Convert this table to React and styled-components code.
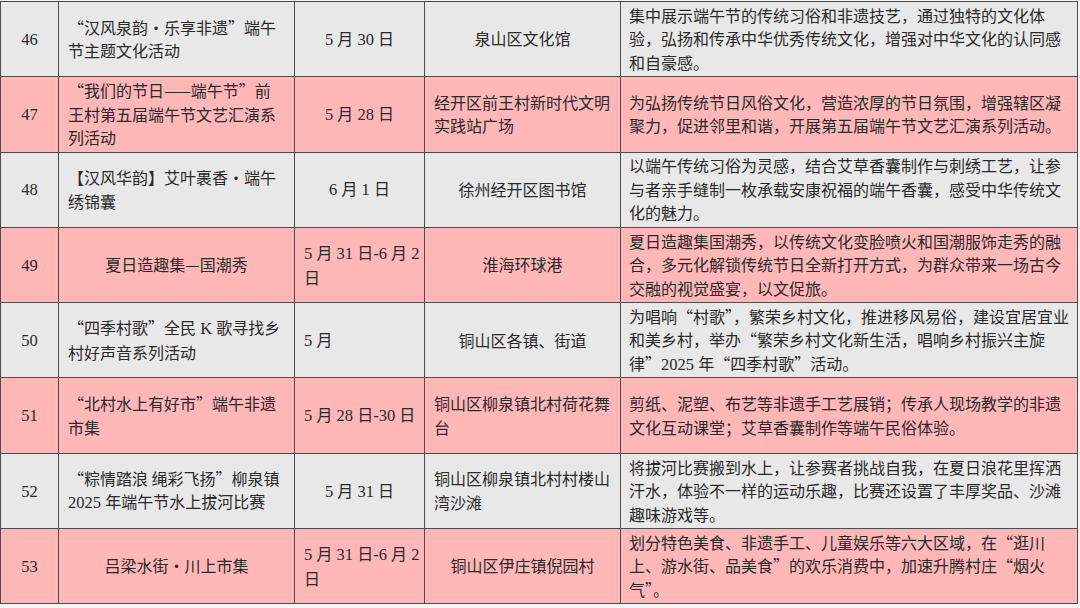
import React from 'react';
import styled, { createGlobalStyle } from 'styled-components';

const rows = [
	{
		num: '46',
		title: { lines: ['“汉风泉韵·乐享非遗”端午', '节主题文化活动'], align: 'left' },
		date: { lines: ['5 月 30 日'], align: 'center' },
		place: { lines: ['泉山区文化馆'], align: 'center' },
		desc: ['集中展示端午节的传统习俗和非遗技艺，通过独特的文化体', '验，弘扬和传承中华优秀传统文化，增强对中华文化的认同感', '和自豪感。'],
	},
	{
		num: '47',
		title: { lines: ['“我们的节日——端午节”前', '王村第五届端午节文艺汇演系', '列活动'], align: 'left' },
		date: { lines: ['5 月 28 日'], align: 'center' },
		place: { lines: ['经开区前王村新时代文明', '实践站广场'], align: 'left' },
		desc: ['为弘扬传统节日风俗文化，营造浓厚的节日氛围，增强辖区凝', '聚力，促进邻里和谐，开展第五届端午节文艺汇演系列活动。'],
	},
	{
		num: '48',
		title: { lines: ['【汉风华韵】艾叶裹香·端午', '绣锦囊'], align: 'left' },
		date: { lines: ['6 月 1 日'], align: 'center' },
		place: { lines: ['徐州经开区图书馆'], align: 'center' },
		desc: ['以端午传统习俗为灵感，结合艾草香囊制作与刺绣工艺，让参', '与者亲手缝制一枚承载安康祝福的端午香囊，感受中华传统文', '化的魅力。'],
	},
	{
		num: '49',
		title: { lines: ['夏日造趣集—国潮秀'], align: 'center' },
		date: { lines: ['5 月 31 日-6 月 2', '日'], align: 'left' },
		place: { lines: ['淮海环球港'], align: 'center' },
		desc: ['夏日造趣集国潮秀，以传统文化变脸喷火和国潮服饰走秀的融', '合，多元化解锁传统节日全新打开方式，为群众带来一场古今', '交融的视觉盛宴，以文促旅。'],
	},
	{
		num: '50',
		title: { lines: ['“四季村歌”全民 K 歌寻找乡', '村好声音系列活动'], align: 'left' },
		date: { lines: ['5 月'], align: 'left' },
		place: { lines: ['铜山区各镇、街道'], align: 'center' },
		desc: ['为唱响“村歌”，繁荣乡村文化，推进移风易俗，建设宜居宜业', '和美乡村，举办“繁荣乡村文化新生活，唱响乡村振兴主旋', '律”2025 年“四季村歌”活动。'],
	},
	{
		num: '51',
		title: { lines: ['“北村水上有好市”端午非遗', '市集'], align: 'left' },
		date: { lines: ['5 月 28 日-30 日'], align: 'center' },
		place: { lines: ['铜山区柳泉镇北村荷花舞', '台'], align: 'left' },
		desc: ['剪纸、泥塑、布艺等非遗手工艺展销；传承人现场教学的非遗', '文化互动课堂；艾草香囊制作等端午民俗体验。'],
	},
	{
		num: '52',
		title: { lines: ['“粽情踏浪 绳彩飞扬”柳泉镇', '2025 年端午节水上拔河比赛'], align: 'left' },
		date: { lines: ['5 月 31 日'], align: 'center' },
		place: { lines: ['铜山区柳泉镇北村村楼山', '湾沙滩'], align: 'left' },
		desc: ['将拔河比赛搬到水上，让参赛者挑战自我，在夏日浪花里挥洒', '汗水，体验不一样的运动乐趣，比赛还设置了丰厚奖品、沙滩', '趣味游戏等。'],
	},
	{
		num: '53',
		title: { lines: ['吕梁水街·川上市集'], align: 'center' },
		date: { lines: ['5 月 31 日-6 月 2', '日'], align: 'left' },
		place: { lines: ['铜山区伊庄镇倪园村'], align: 'center' },
		desc: ['划分特色美食、非遗手工、儿童娱乐等六大区域，在“逛川', '上、游水街、品美食”的欢乐消费中，加速升腾村庄“烟火', '气”。'],
	},
];

// latin runs (digits, letters) are set in the serif face, the rest in the CJK face
const mixed = (text) =>
	text.split(/([0-9A-Za-z\- ]+)/).map((part, i) =>
		/[0-9A-Za-z]/.test(part) ? <Latin key={i}>{part}</Latin> : part
	);

const CellText = ({ lines }) =>
	lines.map((line, i) => <Line key={i}>{mixed(line)}</Line>);

const App = () => (
	<>
		<GlobalStyle />
		<Sheet>
			<Table>
				<colgroup>
					<col style={{ width: 58 }} />
					<col style={{ width: 236 }} />
					<col style={{ width: 130 }} />
					<col style={{ width: 196 }} />
					<col style={{ width: 457 }} />
				</colgroup>
				<tbody>
					{rows.map((row, i) => (
						<Row key={row.num} pink={i % 2 === 1}>
							<Cell align="center">
								<Latin>{row.num}</Latin>
							</Cell>
							<Cell align={row.title.align}>
								<CellText lines={row.title.lines} />
							</Cell>
							<Cell align={row.date.align}>
								<CellText lines={row.date.lines} />
							</Cell>
							<Cell align={row.place.align}>
								<CellText lines={row.place.lines} />
							</Cell>
							<Cell align="left" wide>
								<CellText lines={row.desc} />
							</Cell>
						</Row>
					))}
				</tbody>
			</Table>
		</Sheet>
	</>
);

export default App;

const GlobalStyle = createGlobalStyle`
	html, body {
		margin: 0;
		padding: 0;
		background: #f4f4f4;
	}
`;

const Sheet = styled.div`
	width: 1080px;
	height: 608px;
	overflow: hidden;
	padding-top: 1px;
	box-sizing: border-box;
	font-family: 'Noto Sans CJK SC', 'Liberation Serif', serif;
	font-size: 16px;
	color: #2a2a2a;
`;

const Table = styled.table`
	width: 1077px;
	table-layout: fixed;
	border-collapse: collapse;
`;

const Row = styled.tr`
	height: 75.3px;
	background: ${(p) => (p.pink ? '#ffb7b8' : '#e8e8e8')};
`;

const Cell = styled.td`
	border: 1px solid #4d4d4d;
	padding: 0 ${(p) => (p.wide ? '8px' : '9px')};
	text-align: ${(p) => p.align};
	vertical-align: middle;
	line-height: 23.5px;
`;

const Line = styled.span`
	display: block;
	white-space: nowrap;
`;

const Latin = styled.span`
	font-family: 'Liberation Serif', serif;
	font-size: 16.5px;
`;
